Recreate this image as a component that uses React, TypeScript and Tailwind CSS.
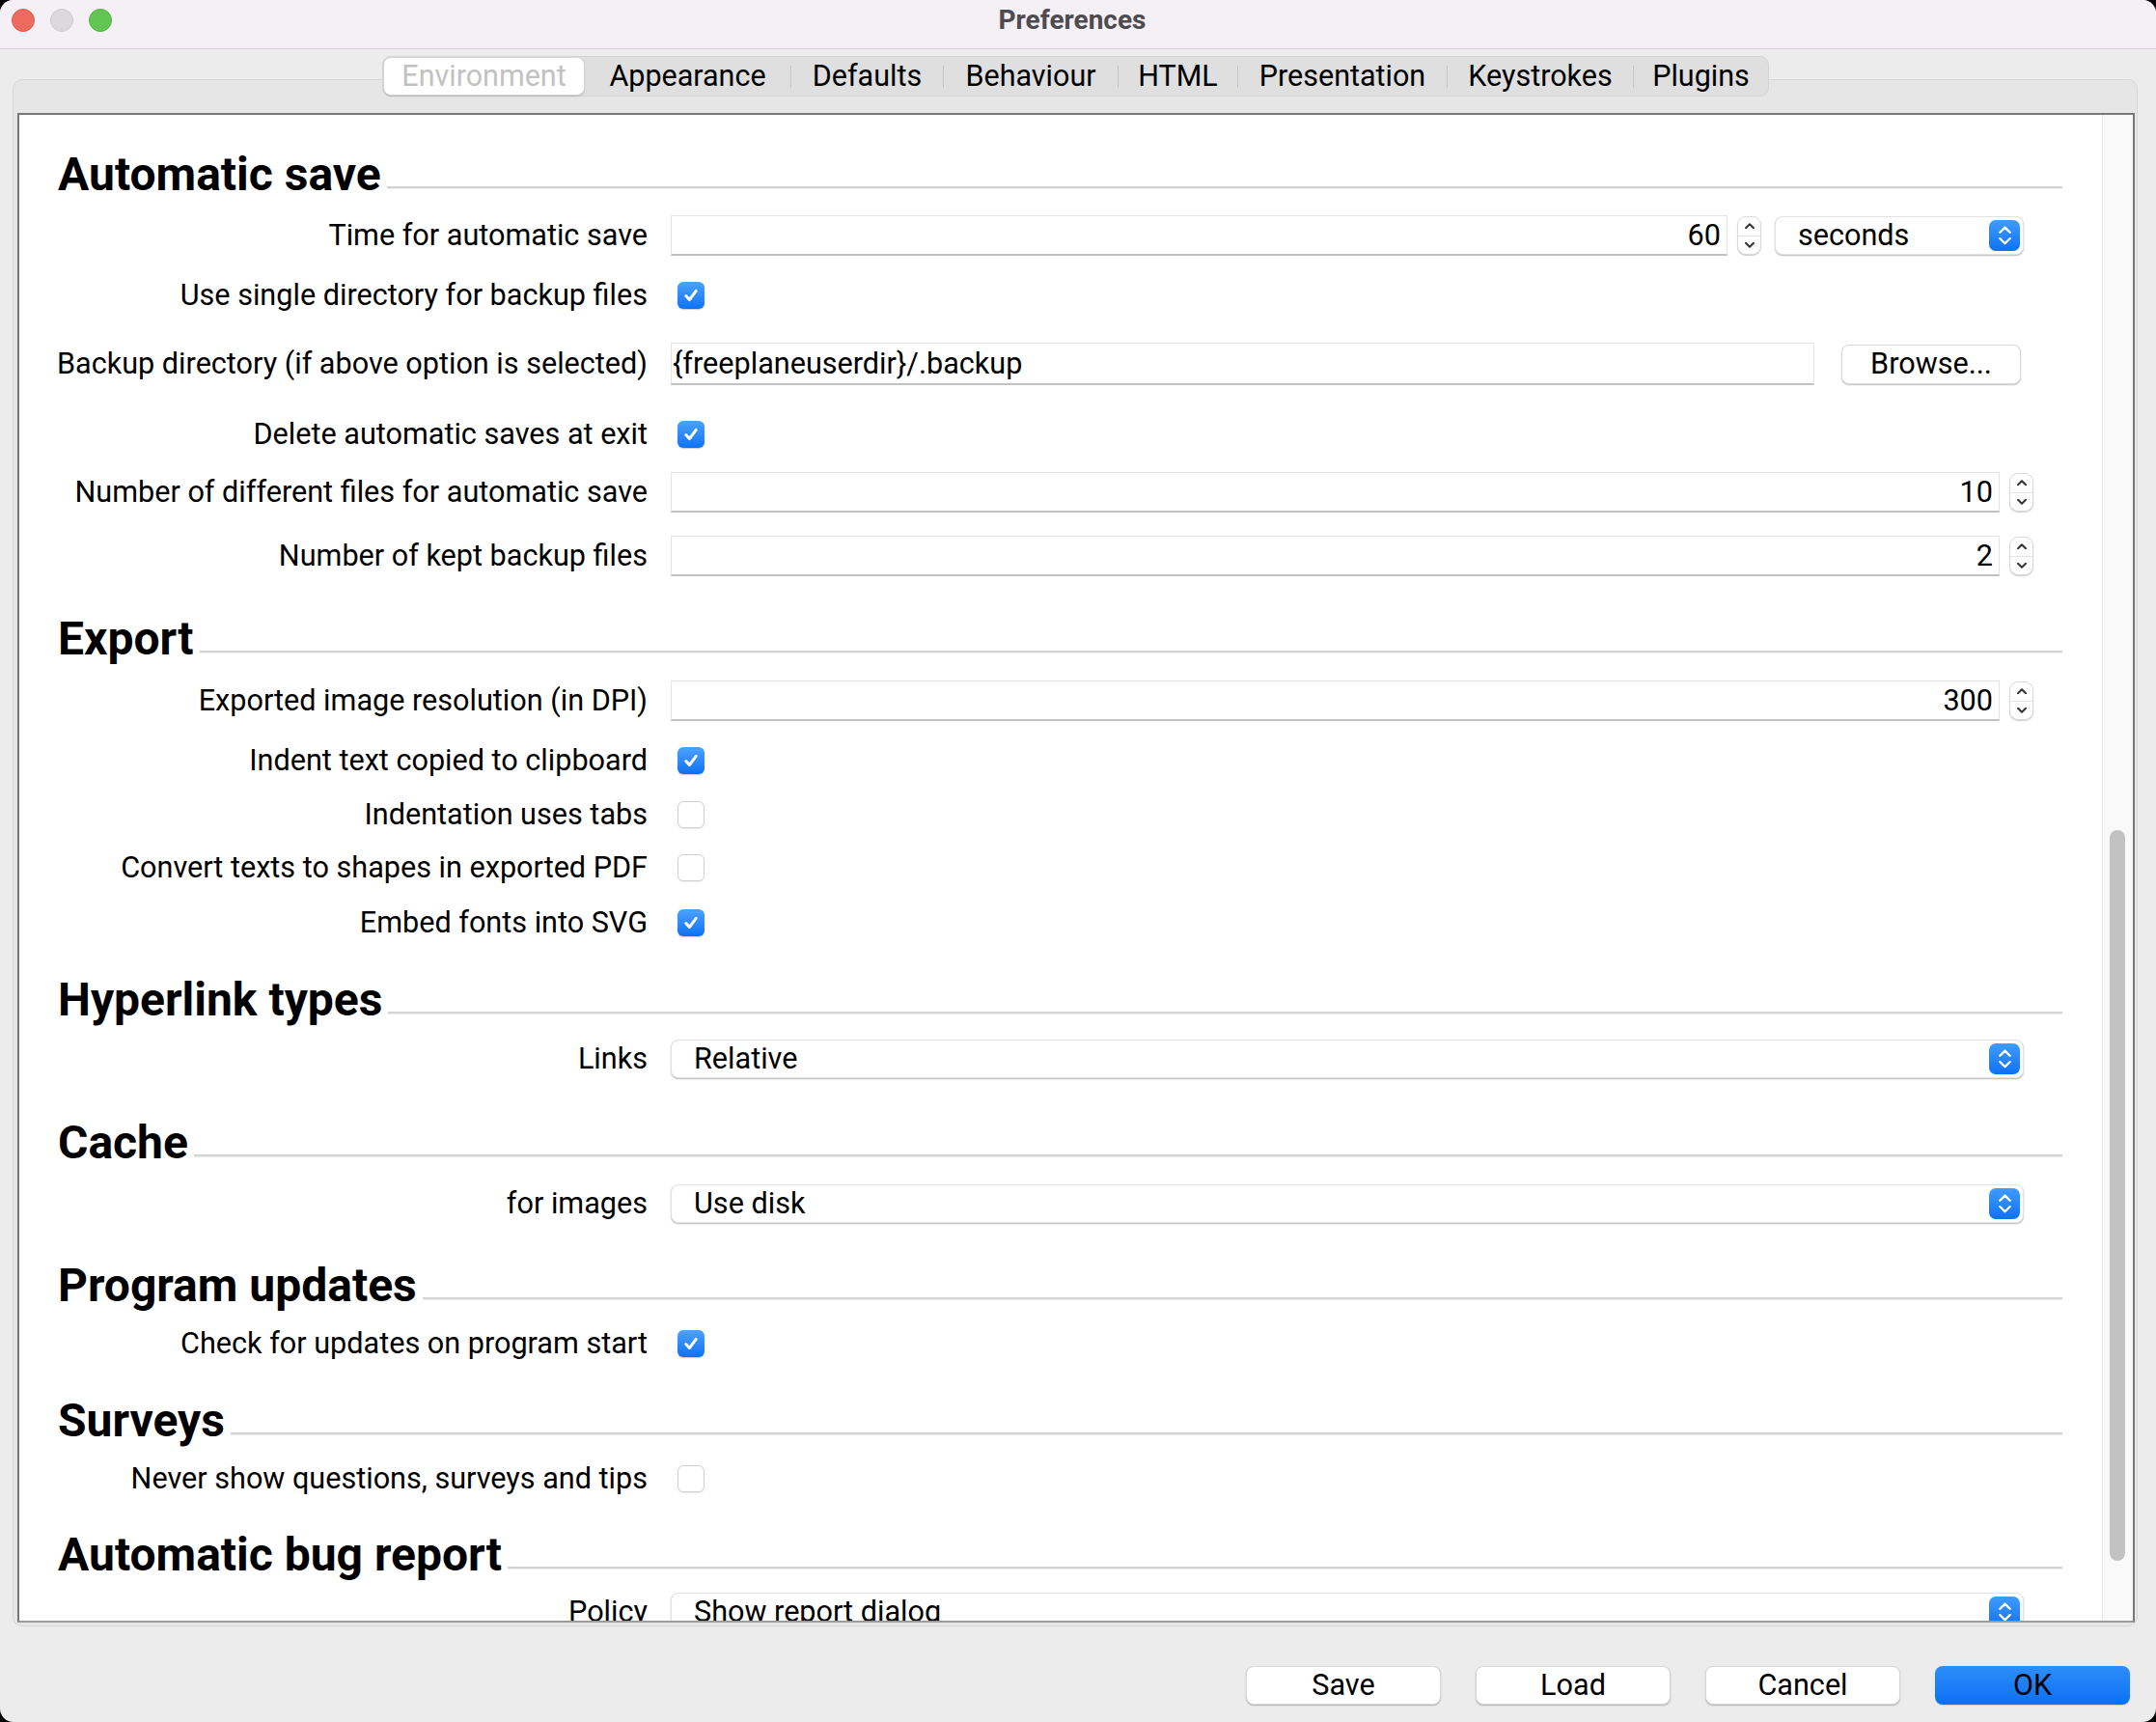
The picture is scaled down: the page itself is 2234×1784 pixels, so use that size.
import type { ReactNode } from "react";

const ChevUp = ({ color = "#333", w = 10, sw = "2" }: { color?: string; w?: number; sw?: string }) => (
  <svg width={w} height={w * 0.6} viewBox="0 0 10 6">
    <path d="M1 5.2 L5 1.2 L9 5.2" stroke={color} strokeWidth={sw} fill="none" strokeLinecap="round" strokeLinejoin="round" />
  </svg>
);

const ChevDown = ({ color = "#333", w = 10, sw = "2" }: { color?: string; w?: number; sw?: string }) => (
  <svg width={w} height={w * 0.6} viewBox="0 0 10 6">
    <path d="M1 0.8 L5 4.8 L9 0.8" stroke={color} strokeWidth={sw} fill="none" strokeLinecap="round" strokeLinejoin="round" />
  </svg>
);

const Check = ({ on }: { on: boolean }) =>
  on ? (
    <div className="ml-[7px] flex h-[28px] w-[28px] items-center justify-center rounded-[6px] bg-linear-to-b from-[#4aa2ff] to-[#0a71f4] shadow-[0_1px_1px_rgba(0,0,0,0.2)]">
      <svg width="18" height="18" viewBox="0 0 18 18">
        <path d="M3.8 9.6 L7.4 13.6 L14.2 4.4" stroke="white" strokeWidth="3" fill="none" strokeLinecap="round" strokeLinejoin="round" />
      </svg>
    </div>
  ) : (
    <div className="ml-[7px] h-[28px] w-[28px] rounded-[6px] border border-[#d2d2d2] bg-white shadow-[0_1px_1px_rgba(0,0,0,0.08)]" />
  );

const Field = ({ w, h = "h-[42px]", value, right }: { w: string; h?: string; value: string; right?: boolean }) => (
  <div
    className={`${w} ${h} flex items-center border border-[#e4e4e4] border-b-2 border-b-[#c2c2c2] bg-white text-[30.6px] whitespace-nowrap ${
      right ? "justify-end pr-[6px]" : "pl-[1px]"
    }`}
  >
    {value}
  </div>
);

const Spinner = () => (
  <div className="ml-[10px] flex h-[40px] w-[25px] flex-col rounded-[9px] border border-[#dadada] bg-white shadow-[0_1px_1px_rgba(0,0,0,0.2)]">
    <div className="flex flex-1 items-center justify-center border-b border-[#e4e4e4]">
      <ChevUp />
    </div>
    <div className="flex flex-1 items-center justify-center">
      <ChevDown />
    </div>
  </div>
);

const Combo = ({ w, value, ml = "" }: { w: string; value: string; ml?: string }) => (
  <div
    className={`${w} ${ml} flex h-[40px] items-center rounded-[8px] border border-[#e2e2e2] bg-white pl-[23px] pr-[3px] text-[30.6px] shadow-[0_1px_1.5px_rgba(0,0,0,0.28)]`}
  >
    <span className="flex-1 whitespace-nowrap">{value}</span>
    <div className="flex h-[32px] w-[32px] flex-col items-center justify-center gap-[4px] rounded-[7px] bg-linear-to-b from-[#3f9bff] to-[#0a71f4]">
      <ChevUp color="#fff" w={13} sw="1.8" />
      <ChevDown color="#fff" w={13} sw="1.8" />
    </div>
  </div>
);

const Heading = ({ title, h }: { title: string; h: string }) => (
  <div className={h}>
    <div className="flex h-[60px] items-center">
      <div className="whitespace-nowrap text-[48px] font-bold leading-none text-black">{title}</div>
      <div className="mb-[15px] ml-[6px] h-[3px] flex-1 self-end border-t-2 border-[#d3d3d3] bg-[#ededed]" />
    </div>
  </div>
);

const Row = ({ label, h, children }: { label: string; h: string; children: ReactNode }) => (
  <div className={h}>
    <div className="flex h-[60px] items-center">
      <div className="flex w-[611px] shrink-0 justify-end whitespace-nowrap text-[30.6px] text-black">{label}</div>
      <div className="ml-[24px] flex items-center">{children}</div>
    </div>
  </div>
);

const Btn = ({ label, primary }: { label: string; primary?: boolean }) => (
  <div
    className={`flex h-[40px] w-[202px] items-center justify-center rounded-[8px] text-[30.6px] text-black ${
      primary
        ? "bg-linear-to-b from-[#2d8ef9] to-[#0a6ff5] shadow-[0_1px_1px_rgba(0,0,0,0.15)]"
        : "border border-[#d8d8d8] bg-white shadow-[0_1px_1.5px_rgba(0,0,0,0.25)]"
    }`}
  >
    {label}
  </div>
);

const tabs = [
  { name: "Appearance", w: "w-[213px]" },
  { name: "Defaults", w: "w-[157px]" },
  { name: "Behaviour", w: "w-[180px]" },
  { name: "HTML", w: "w-[123px]" },
  { name: "Presentation", w: "w-[216px]" },
  { name: "Keystrokes", w: "w-[192px]" },
  { name: "Plugins", w: "w-[139px]" },
];

export default function App() {
  return (
    <div className="h-[1784px] w-[2234px] overflow-hidden bg-black font-['Roboto',sans-serif]">
      <div className="flex h-[1784px] flex-col overflow-hidden rounded-[14px] bg-[#ececec]">
        {/* title bar */}
        <div className="h-[51px] border-b border-[#d2d0d4] bg-[#f4f0f5]">
          <div className="flex h-[42px] items-center pl-[12px]">
            <div className="flex gap-[16px]">
              <div className="h-[24px] w-[24px] rounded-full border border-[#d95a50] bg-[#ee6a5f]" />
              <div className="h-[24px] w-[24px] rounded-full border border-[#ccc8cc] bg-[#dcd8dc]" />
              <div className="h-[24px] w-[24px] rounded-full border border-[#52b044] bg-[#62c554]" />
            </div>
            <div className="flex flex-1 justify-center pr-[128px] text-[28px] font-bold text-[#4d4b4f]">Preferences</div>
          </div>
        </div>

        {/* tabs */}
        <div className="relative z-10 mt-[7px] flex justify-center pr-[5px]">
          <div className="flex h-[42px] items-center rounded-[9px] border border-[#d4d4d4] bg-[#dfdfdf]">
            <div className="flex h-[40px] w-[209px] items-center justify-center rounded-[8px] border border-[#d6d6d6] bg-white text-[30.5px] text-[#c2c2c2] shadow-[0_1px_1px_rgba(0,0,0,0.15)]">
              Environment
            </div>
            {tabs.map((t, i) => (
              <div key={t.name} className="flex items-center">
                {i > 0 && <div className="h-[23px] w-px bg-[#c6c6c6]" />}
                <div className={`${t.w} flex items-center justify-center whitespace-nowrap text-[30.5px] text-black`}>{t.name}</div>
              </div>
            ))}
          </div>
        </div>

        {/* panel */}
        <div className="-mt-[18px] ml-[13px] mr-[19px] rounded-[10px] border border-[#d6d6d6] bg-[#e6e6e6] px-[4px] pb-[3px] pt-[34px]">
          <div className="mr-[-2px] flex border-2 border-[#787878] border-b-[#9c9c9c] bg-white">
            <div className="h-[1560px] flex-1 overflow-hidden pl-[40px] pr-[41px] pt-[32px]">
              <Heading title="Automatic save" h="h-[63px]" />
              <Row label="Time for automatic save" h="h-[62px]">
                <Field w="w-[1095px]" value="60" right />
                <Spinner />
                <Combo w="w-[258px]" ml="ml-[14px]" value="seconds" />
              </Row>
              <Row label="Use single directory for backup files" h="h-[71px]">
                <Check on />
              </Row>
              <Row label="Backup directory (if above option is selected)" h="h-[73px]">
                <Field w="w-[1185px]" h="h-[44px]" value="{freeplaneuserdir}/.backup" />
                <div className="ml-[28px] flex h-[41px] w-[186px] items-center justify-center rounded-[8px] border border-[#dadada] bg-white text-[30.6px] shadow-[0_1px_1.5px_rgba(0,0,0,0.25)]">
                  Browse...
                </div>
              </Row>
              <Row label="Delete automatic saves at exit" h="h-[60px]">
                <Check on />
              </Row>
              <Row label="Number of different files for automatic save" h="h-[66px]">
                <Field w="w-[1377px]" value="10" right />
                <Spinner />
              </Row>
              <Row label="Number of kept backup files" h="h-[86px]">
                <Field w="w-[1377px]" value="2" right />
                <Spinner />
              </Row>

              <Heading title="Export" h="h-[64px]" />
              <Row label="Exported image resolution (in DPI)" h="h-[62px]">
                <Field w="w-[1377px]" value="300" right />
                <Spinner />
              </Row>
              <Row label="Indent text copied to clipboard" h="h-[56px]">
                <Check on />
              </Row>
              <Row label="Indentation uses tabs" h="h-[55px]">
                <Check on={false} />
              </Row>
              <Row label="Convert texts to shapes in exported PDF" h="h-[57px]">
                <Check on={false} />
              </Row>
              <Row label="Embed fonts into SVG" h="h-[80px]">
                <Check on />
              </Row>

              <Heading title="Hyperlink types" h="h-[61px]" />
              <Row label="Links" h="h-[87px]">
                <Combo w="w-[1402px]" value="Relative" />
              </Row>

              <Heading title="Cache" h="h-[63px]" />
              <Row label="for images" h="h-[85px]">
                <Combo w="w-[1402px]" value="Use disk" />
              </Row>

              <Heading title="Program updates" h="h-[60px]" />
              <Row label="Check for updates on program start" h="h-[80px]">
                <Check on />
              </Row>

              <Heading title="Surveys" h="h-[60px]" />
              <Row label="Never show questions, surveys and tips" h="h-[79px]">
                <Check on={false} />
              </Row>

              <Heading title="Automatic bug report" h="h-[59px]" />
              <Row label="Policy" h="h-[60px]">
                <Combo w="w-[1402px]" value="Show report dialog" />
              </Row>
            </div>

            {/* scrollbar */}
            <div className="flex w-[32px] flex-col border-l border-[#e9e9e9] bg-[#f9f9f9]">
              <div className="h-[741px]" />
              <div className="ml-[7px] h-[757px] w-[16px] rounded-full bg-[#c2c2c2]" />
            </div>
          </div>
        </div>

        {/* buttons */}
        <div className="mt-[41px] flex justify-end gap-[36px] pr-[27px]">
          <Btn label="Save" />
          <Btn label="Load" />
          <Btn label="Cancel" />
          <Btn label="OK" primary />
        </div>
      </div>
    </div>
  );
}
